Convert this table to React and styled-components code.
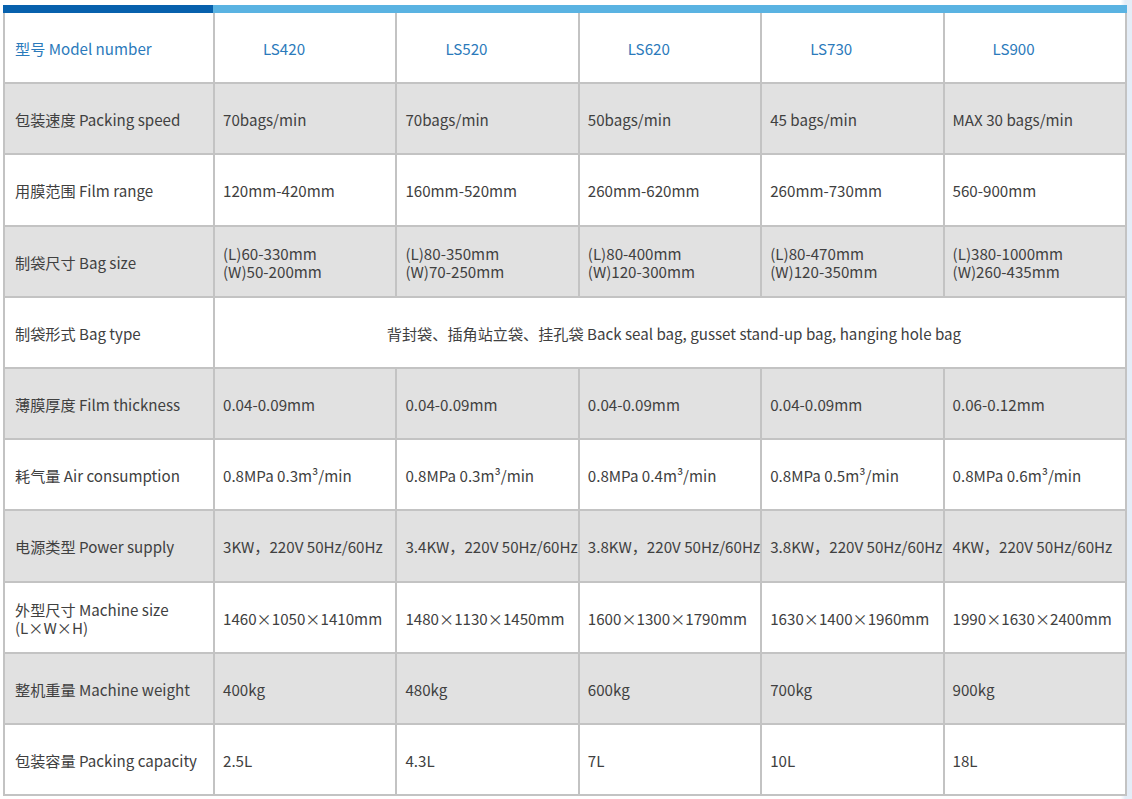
import React from "react";
import styled, { createGlobalStyle } from "styled-components";

const Global = createGlobalStyle`
  html, body { margin: 0; padding: 0; background: #ffffff; }
  body { font-family: "Noto Sans CJK SC", "Noto Sans", sans-serif; }
`;

const Page = styled.div`
  width: 1132px;
  height: 799px;
  padding: 5px 0 0 3px;
  box-sizing: border-box;
  background: linear-gradient(90deg, #ffffff 0%, #ffffff 99%, #e4edf7 99.4%);
`;

const TopBar = styled.div`
  display: grid;
  grid-template-columns: 210px 914px;
  height: 8px;
`;

const BarSeg = styled.div`
  background: ${(p) => (p.$dark ? "#0761ad" : "#5ab3e2")};
`;

const Grid = styled.div`
  display: grid;
  grid-template-columns: 208px repeat(5, 180.4px);
  grid-auto-rows: 69.2px;
  gap: 2px;
  padding: 0 2px 2px 2px;
  width: 1124px;
  box-sizing: border-box;
  background: #c3c3c3;
`;

const Cell = styled.div`
  display: flex;
  align-items: center;
  justify-content: ${(p) => (p.$center ? "center" : "flex-start")};
  padding-left: ${(p) => (p.$center ? "8px" : p.$pl || "8px")};
  padding-top: 1px;
  box-sizing: border-box;
  min-width: 0;
  grid-column: ${(p) => p.$span || "auto"};
  background: ${(p) => (p.$gray ? "#e1e1e1" : "#ffffff")};
  color: ${(p) => (p.$head ? "#2b7abb" : "#404040")};
  font-size: 15.15px;
  line-height: 18px;
  white-space: pre;
  overflow: visible;
`;

const models = ["LS420", "LS520", "LS620", "LS730", "LS900"];

const rows = [
  ["包装速度 Packing speed", ["70bags/min", "70bags/min", "50bags/min", "45 bags/min", "MAX 30 bags/min"]],
  ["用膜范围 Film range", ["120mm-420mm", "160mm-520mm", "260mm-620mm", "260mm-730mm", "560-900mm"]],
  ["制袋尺寸 Bag size", [
    "(L)60-330mm\n(W)50-200mm",
    "(L)80-350mm\n(W)70-250mm",
    "(L)80-400mm\n(W)120-300mm",
    "(L)80-470mm\n(W)120-350mm",
    "(L)380-1000mm\n(W)260-435mm",
  ]],
  ["制袋形式 Bag type", "背封袋、插角站立袋、挂孔袋 Back seal bag, gusset stand-up bag, hanging hole bag"],
  ["薄膜厚度 Film thickness", ["0.04-0.09mm", "0.04-0.09mm", "0.04-0.09mm", "0.04-0.09mm", "0.06-0.12mm"]],
  ["耗气量 Air consumption", ["0.8MPa 0.3m³/min", "0.8MPa 0.3m³/min", "0.8MPa 0.4m³/min", "0.8MPa 0.5m³/min", "0.8MPa 0.6m³/min"]],
  ["电源类型 Power supply", ["3KW，220V 50Hz/60Hz", "3.4KW，220V 50Hz/60Hz", "3.8KW，220V 50Hz/60Hz", "3.8KW，220V 50Hz/60Hz", "4KW，220V 50Hz/60Hz"]],
  ["外型尺寸 Machine size\n(L×W×H)", ["1460×1050×1410mm", "1480×1130×1450mm", "1600×1300×1790mm", "1630×1400×1960mm", "1990×1630×2400mm"]],
  ["整机重量 Machine weight", ["400kg", "480kg", "600kg", "700kg", "900kg"]],
  ["包装容量 Packing capacity", ["2.5L", "4.3L", "7L", "10L", "18L"]],
];

export default function App() {
  return (
    <>
      <Global />
      <Page>
        <TopBar>
          <BarSeg $dark />
          <BarSeg />
        </TopBar>
        <Grid>
          <Cell $head $pl="10px">型号 Model number</Cell>
          {models.map((m) => (
            <Cell key={m} $head $pl="48px">{m}</Cell>
          ))}
          {rows.map(([label, vals], i) => {
            const gray = i % 2 === 0;
            return (
              <React.Fragment key={label}>
                <Cell $gray={gray} $pl="10px">{label}</Cell>
                {Array.isArray(vals) ? (
                  vals.map((v, j) => (
                    <Cell key={j} $gray={gray}>{v}</Cell>
                  ))
                ) : (
                  <Cell $gray={gray} $center $span="span 5">{vals}</Cell>
                )}
              </React.Fragment>
            );
          })}
        </Grid>
      </Page>
    </>
  );
}
